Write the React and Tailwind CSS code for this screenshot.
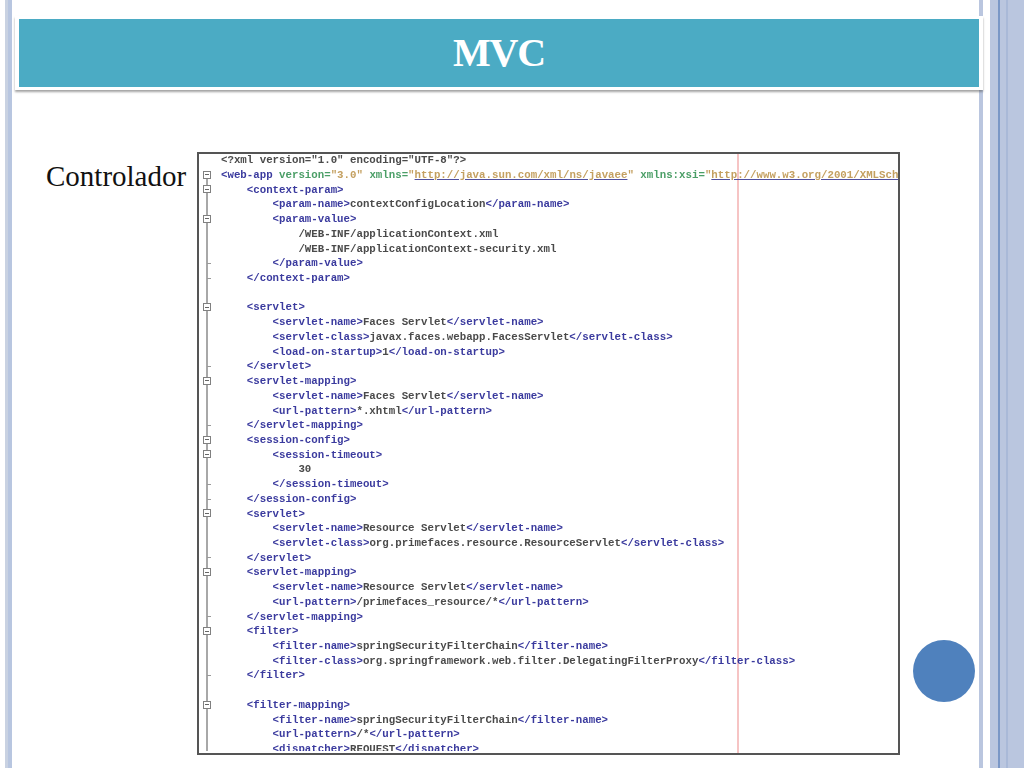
const mono = "font-['Liberation_Mono',monospace]";

const T = ({ children }) => <span className="text-[#3a3a9e]">{children}</span>;
const A = ({ children }) => <span className="text-[#4a9e66]">{children}</span>;
const V = ({ children }) => <span className="text-[#c4a060]">{children}</span>;
const U = ({ children }) => <span className="text-[#c4a060] underline decoration-[#5050a0]">{children}</span>;

// tag helper: open tag, text, close tag on one row
const tag = (name, text) => (
  <>
    <T>{`<${name}>`}</T>
    {text}
    <T>{`</${name}>`}</T>
  </>
);

// fold: "box" draws the fold marker, "end" a small tick, none just the guide line
const rows = [
  { i: 0, c: <>&lt;?xml version="1.0" encoding="UTF-8"?&gt;</>, noLine: true },
  { i: 0, fold: "box", first: true, c: <><T>{'<web-app'}</T> <A>version=</A><V>"3.0"</V> <A>xmlns=</A><V>"</V><U>http://java.sun.com/xml/ns/javaee</U><V>"</V> <A>xmlns:xsi=</A><V>"</V><U>http://www.w3.org/2001/XMLSch</U></> },
  { i: 1, fold: "box", c: <T>{'<context-param>'}</T> },
  { i: 2, c: tag("param-name", "contextConfigLocation") },
  { i: 2, fold: "box", c: <T>{'<param-value>'}</T> },
  { i: 3, c: "/WEB-INF/applicationContext.xml" },
  { i: 3, c: "/WEB-INF/applicationContext-security.xml" },
  { i: 2, fold: "end", c: <T>{'</param-value>'}</T> },
  { i: 1, fold: "end", c: <T>{'</context-param>'}</T> },
  { i: 0, c: "" },
  { i: 1, fold: "box", c: <T>{'<servlet>'}</T> },
  { i: 2, c: tag("servlet-name", "Faces Servlet") },
  { i: 2, c: tag("servlet-class", "javax.faces.webapp.FacesServlet") },
  { i: 2, c: tag("load-on-startup", "1") },
  { i: 1, fold: "end", c: <T>{'</servlet>'}</T> },
  { i: 1, fold: "box", c: <T>{'<servlet-mapping>'}</T> },
  { i: 2, c: tag("servlet-name", "Faces Servlet") },
  { i: 2, c: tag("url-pattern", "*.xhtml") },
  { i: 1, fold: "end", c: <T>{'</servlet-mapping>'}</T> },
  { i: 1, fold: "box", c: <T>{'<session-config>'}</T> },
  { i: 2, fold: "box", c: <T>{'<session-timeout>'}</T> },
  { i: 3, c: "30" },
  { i: 2, fold: "end", c: <T>{'</session-timeout>'}</T> },
  { i: 1, fold: "end", c: <T>{'</session-config>'}</T> },
  { i: 1, fold: "box", c: <T>{'<servlet>'}</T> },
  { i: 2, c: tag("servlet-name", "Resource Servlet") },
  { i: 2, c: tag("servlet-class", "org.primefaces.resource.ResourceServlet") },
  { i: 1, fold: "end", c: <T>{'</servlet>'}</T> },
  { i: 1, fold: "box", c: <T>{'<servlet-mapping>'}</T> },
  { i: 2, c: tag("servlet-name", "Resource Servlet") },
  { i: 2, c: tag("url-pattern", "/primefaces_resource/*") },
  { i: 1, fold: "end", c: <T>{'</servlet-mapping>'}</T> },
  { i: 1, fold: "box", c: <T>{'<filter>'}</T> },
  { i: 2, c: tag("filter-name", "springSecurityFilterChain") },
  { i: 2, c: tag("filter-class", "org.springframework.web.filter.DelegatingFilterProxy") },
  { i: 1, fold: "end", c: <T>{'</filter>'}</T> },
  { i: 0, c: "" },
  { i: 1, fold: "box", c: <T>{'<filter-mapping>'}</T> },
  { i: 2, c: tag("filter-name", "springSecurityFilterChain") },
  { i: 2, c: tag("url-pattern", "/*") },
  { i: 2, c: tag("dispatcher", "REQUEST") },
];

const indents = ["pl-0", "pl-[25.8px]", "pl-[51.6px]", "pl-[77.4px]"];

function Gutter({ fold, noLine, first }) {
  return (
    <div className="relative w-[22px] h-full shrink-0">
      {!noLine && (
        <div className={`absolute left-[7px] bottom-0 w-[2px] bg-[#a8a8a8] ${first ? "top-[7px]" : "top-0"}`} />
      )}
      {fold === "box" && (
        <div className="absolute left-[4px] top-[3px] w-[8px] h-[8px] border border-[#808080] bg-white flex items-center justify-center">
          <div className="w-[4px] h-px bg-[#666]" />
        </div>
      )}
      {fold === "end" && <div className="absolute left-[8px] top-[7px] w-[4px] h-px bg-[#9a9a9a]" />}
    </div>
  );
}

function CodeShot() {
  return (
    <div className="relative w-[703px] h-[603px] border-2 border-[#555] bg-white overflow-hidden shrink-0">
      <div className="absolute left-[538px] top-0 bottom-0 w-[2px] bg-[#f6c4c4]" />
      <div className={`${mono} relative -mt-px h-[598px] overflow-hidden text-[10.75px] font-bold text-[#4a4a4a] blur-[0.4px]`}>
        {rows.map((r, n) => (
          <div key={n} className="flex items-center h-[14.725px] whitespace-pre">
            <Gutter fold={r.fold} noLine={r.noLine} first={r.first} />
            <div className={indents[r.i]}>{r.c}</div>
          </div>
        ))}
      </div>
    </div>
  );
}

export default function App() {
  return (
    <div className="relative w-[1024px] h-[768px] bg-white overflow-hidden flex font-['Liberation_Serif',serif]">
      {/* left stripes */}
      <div className="w-[5px] shrink-0" />
      <div className="w-[3px] shrink-0 bg-[#c9d2e2]" />
      <div className="w-[4px] shrink-0 bg-[#b8c6e0]" />

      <div className="w-[967px] shrink-0 flex flex-col">
        <div className="mt-[16px] ml-[3px] w-[968px] h-[74px] bg-white shadow-[0_2px_2px_rgba(90,90,90,0.55)] px-[4px] py-[3px] relative z-10">
          <div className="h-full bg-[#4babc4] flex items-center justify-center">
            <h1 className="text-[40px] font-bold text-white tracking-[-1.2px] leading-none mb-[1px]">MVC</h1>
          </div>
        </div>
        <div className="flex mt-[62px] pl-[34px]">
          <p className="w-[151px] shrink-0 text-[29px] leading-[30px] mt-[9px] text-[#111] whitespace-nowrap">Controlador</p>
          <CodeShot />
        </div>
      </div>

      {/* right stripes */}
      <div className="w-[4px] shrink-0 bg-[#bac6df]" />
      <div className="w-[7px] shrink-0" />
      <div className="w-[8px] shrink-0 bg-[#bac6df]" />
      <div className="w-[2px] shrink-0 bg-[#7a97c6]" />
      <div className="w-[6px] shrink-0 bg-[#bac6df]" />
      <div className="w-[2px] shrink-0 bg-[#a9b9d8]" />
      <div className="flex-1 bg-[#bac6df]" />

      {/* page-number dot */}
      <div className="absolute left-[913px] top-[640px] w-[62px] h-[62px] rounded-full bg-[#4f81bd]" />
    </div>
  );
}
